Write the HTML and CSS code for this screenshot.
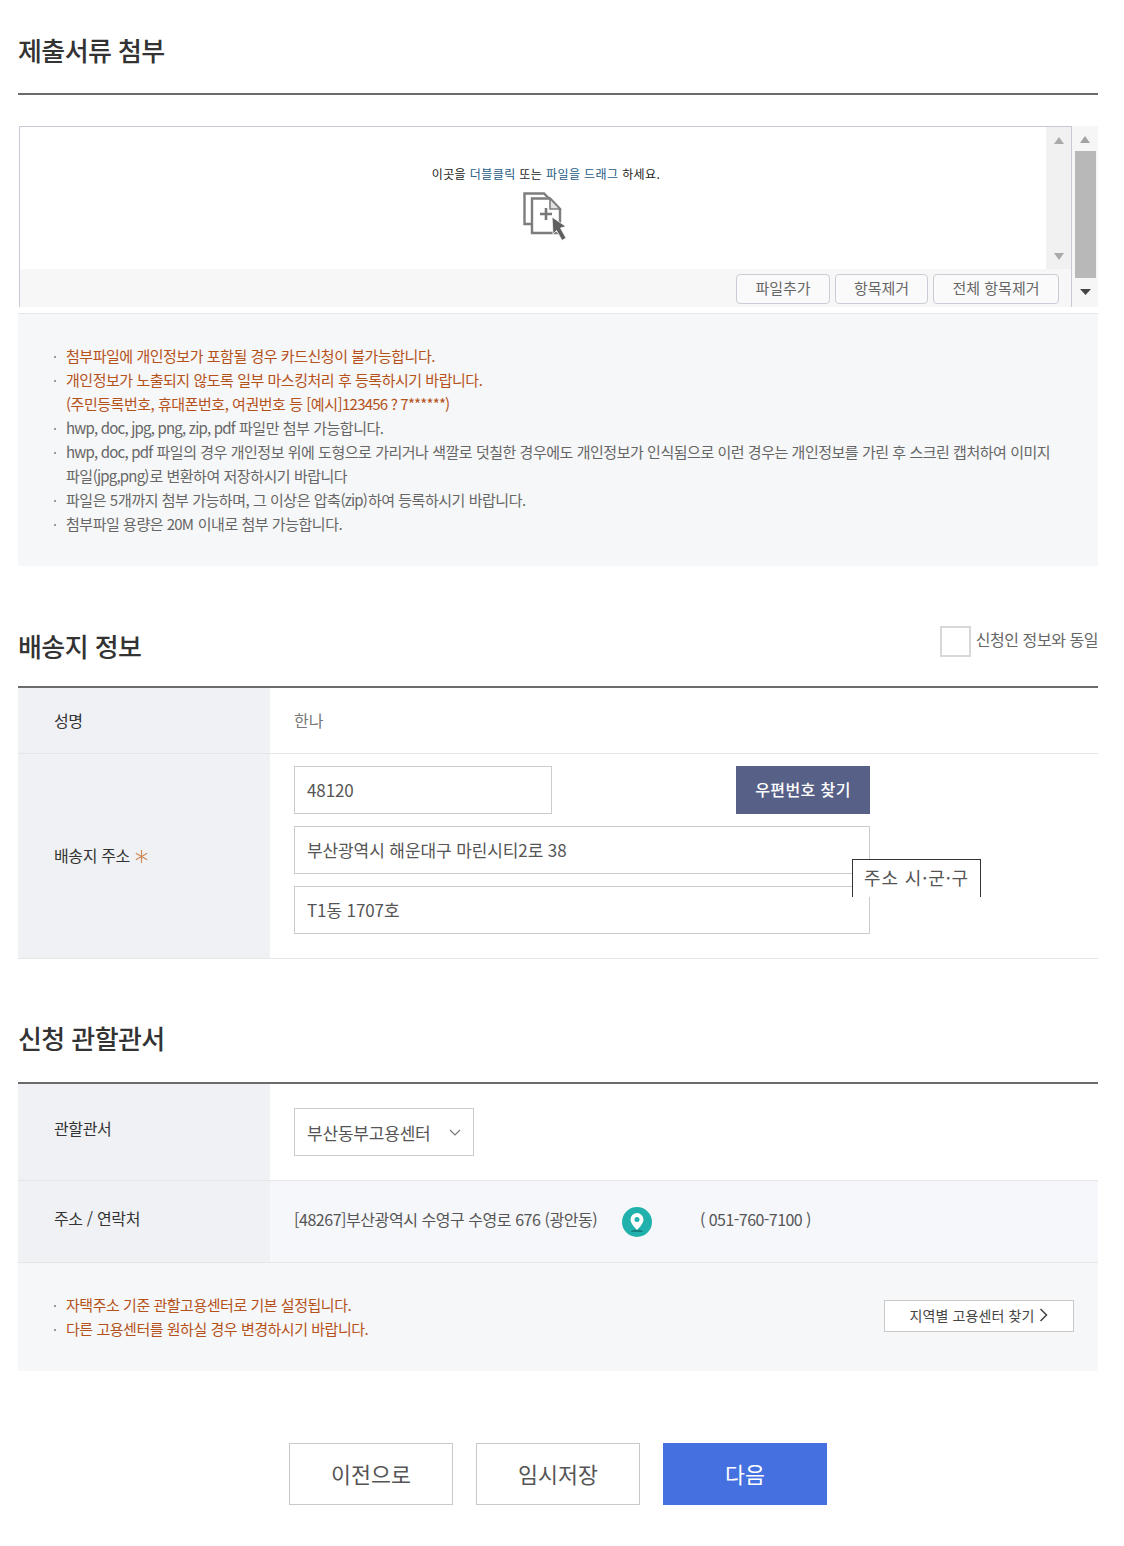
FILE: index.html
```html
<!DOCTYPE html>
<html lang="ko">
<head>
<meta charset="utf-8">
<title>제출서류 첨부</title>
<link rel="stylesheet" href="styles.css">
</head>
<body>
<main class="page">
  <h2 class="title first">제출서류 첨부</h2>
  <div class="rule"></div>

  <div class="uploader">
    <div class="up-main">
      <div class="drop">
        <div class="drop-area">
          <p class="drop-text">이곳을 <span class="link">더블클릭</span> 또는 <span class="link">파일을 드래그</span> 하세요.</p>
          <svg class="drop-icon" width="46" height="50" viewBox="0 0 46 50">
            <path d="M8 32H1.500V1.500H21l5 5" fill="none" stroke="#7d7d7d" stroke-width="2.400"/>
            <path d="M9 6.500h18l10 10.500v24H9z" fill="#fff" stroke="#7d7d7d" stroke-width="2.400"/>
            <path d="M27 6.500V17h10z" fill="#e4e4e4" stroke="#7d7d7d" stroke-width="1.600"/>
            <path d="M17 22h12M23 16v12" stroke="#777" stroke-width="2.600"/>
            <path d="M29 25l1 17 3.500-3.500 5.500 10 4-2.500-5.500-10 5.500-1.500z" fill="#5f5f5f" stroke="#fff" stroke-width=".8"/>
          </svg>
        </div>
        <div class="inner-bar">
          <svg width="10" height="7" viewBox="0 0 10 7"><path d="M5 0l5 7H0z" fill="#aaa"/></svg>
          <svg width="10" height="7" viewBox="0 0 10 7"><path d="M5 7L0 0h10z" fill="#aaa"/></svg>
        </div>
      </div>
      <div class="up-actions">
        <button class="up-btn w-a">파일추가</button>
        <button class="up-btn w-b">항목제거</button>
        <button class="up-btn w-c">전체 항목제거</button>
      </div>
    </div>
    <div class="outer-bar">
      <svg class="arrow-top" width="10" height="7" viewBox="0 0 10 7"><path d="M5 0l5 7H0z" fill="#a3a3a3"/></svg>
      <div class="thumb"></div>
      <svg class="arrow-bottom" width="11" height="6" viewBox="0 0 11 6"><path d="M5.500 6L0 0h11z" fill="#444"/></svg>
    </div>
  </div>

  <div class="note note-upload">
    <ul class="bullets">
      <li class="warn">첨부파일에 개인정보가 포함될 경우 카드신청이 불가능합니다.</li>
      <li class="warn">개인정보가 노출되지 않도록 일부 마스킹처리 후 등록하시기 바랍니다.<br>(주민등록번호, 휴대폰번호, 여권번호 등 [예시]<span class="lat">123456 ? 7******)</span></li>
      <li><span class="lat">hwp, doc, jpg, png, zip, pdf </span>파일만 첨부 가능합니다.</li>
      <li><span class="lat">hwp, doc, pdf </span>파일의 경우 개인정보 위에 도형으로 가리거나 색깔로 덧칠한 경우에도 개인정보가 인식됨으로 이런 경우는 개인정보를 가린 후 스크린 캡처하여 이미지<br>파일<span class="lat">(jpg,png)</span>로 변환하여 저장하시기 바랍니다</li>
      <li>파일은 <span class="lat">5</span>개까지 첨부 가능하며, 그 이상은 압축<span class="lat">(zip)</span>하여 등록하시기 바랍니다.</li>
      <li>첨부파일 용량은 <span class="lat">20M</span> 이내로 첨부 가능합니다.</li>
    </ul>
  </div>

  <div class="head-row">
    <h2 class="title">배송지 정보</h2>
    <label class="same"><span class="check"></span>신청인 정보와 동일</label>
  </div>
  <div class="rule"></div>

  <div class="row row-name">
    <div class="th">성명</div>
    <div class="td name">한나</div>
  </div>
  <div class="row row-addr">
    <div class="th">배송지 주소
      <svg class="star" width="13" height="13" viewBox="0 0 13 13"><path d="M6.500 0v13M.8 3.200l11.400 6.600M12.200 3.200L.8 9.800" stroke="#cf8a57" stroke-width="1.200"/></svg>
    </div>
    <div class="td addr">
      <div class="zip-line">
        <div class="input zip">48120</div>
        <button class="zip-btn">우편번호 찾기</button>
      </div>
      <div class="input wide">부산광역시 해운대구 마린시티2로 38</div>
      <div class="input wide">T1동 1707호</div>
      <div class="tooltip">주소 시·군·구</div>
    </div>
  </div>

  <h2 class="title third">신청 관할관서</h2>
  <div class="rule"></div>

  <div class="row row-office">
    <div class="th up">관할관서</div>
    <div class="td">
      <div class="input select">부산동부고용센터
        <svg width="12" height="7" viewBox="0 0 12 7"><path d="M1 1l5 5 5-5" fill="none" stroke="#777" stroke-width="1.200"/></svg>
      </div>
    </div>
  </div>
  <div class="row row-contact">
    <div class="th up">주소 / 연락처</div>
    <div class="td contact">
      <span class="place">[48267]부산광역시 수영구 수영로 676 (광안동)</span>
      <svg class="pin" width="30" height="30" viewBox="0 0 30 30">
        <circle cx="15" cy="15" r="15" fill="#20b1ad"/>
        <path d="M9 25a6 2.500 0 0 1 12 0z" fill="#14807f"/>
        <path d="M15 6a6.500 6.500 0 0 0-6.500 6.500C8.500 17 15 23 15 23s6.500-6 6.500-10.500A6.500 6.500 0 0 0 15 6z" fill="#fff"/>
        <circle cx="15" cy="12.500" r="2.500" fill="#20b1ad"/>
      </svg>
      <span class="phone">( 051-760-7100 )</span>
    </div>
  </div>
  <div class="note note-office">
    <ul class="bullets">
      <li class="warn">자택주소 기준 관할고용센터로 기본 설정됩니다.</li>
      <li class="warn">다른 고용센터를 원하실 경우 변경하시기 바랍니다.</li>
    </ul>
    <a class="region">지역별 고용센터 찾기
      <svg width="9" height="14" viewBox="0 0 9 14"><path d="M1.500 1l6 6-6 6" fill="none" stroke="#444" stroke-width="1.500"/></svg>
    </a>
  </div>

  <div class="actions">
    <button class="act">이전으로</button>
    <button class="act">임시저장</button>
    <button class="act primary">다음</button>
  </div>
</main>
</body>
</html>
```

FILE: styles.css
```css
* { box-sizing: border-box; }
html, body { margin: 0; padding: 0; background: #fff; }
body {
  font-family: "Noto Sans CJK KR", "Noto Sans", sans-serif;
  color: #555;
  height: 1546px;
  overflow: hidden;
}
.page { width: 1080px; margin-left: 18px; }
h2, p, ul { margin: 0; padding: 0; }
button { font-family: inherit; cursor: pointer; }

.title {
  font-size: 26px;
  line-height: 38px;
  font-weight: 500;
  color: #333;
  letter-spacing: -0.6px;
}
.title.first { padding-top: 31px; height: 93px; }
.title.third { margin-top: 60px; height: 63px; }
.rule { height: 2px; background: #6b6b6b; }

.uploader { display: flex; margin-top: 31px; height: 181px; }
.up-main {
  width: 1053px;
  margin-left: 1px;
  border: 1px solid #c6cad3;
  border-bottom: 0;
  display: flex;
  flex-direction: column;
}
.drop { height: 142px; display: flex; }
.drop-area { flex: 1; display: flex; flex-direction: column; align-items: center; padding-left: 26px; }
.drop-text {
  margin-top: 38px;
  font-size: 12px;
  line-height: 18px;
  color: #222;
  letter-spacing: 0.4px;
}
.link { color: #1d5b85; }
.drop-icon { margin-top: 9px; }
.inner-bar {
  width: 25px;
  background: #f1f1f1;
  display: flex;
  flex-direction: column;
  align-items: center;
  justify-content: space-between;
  padding: 10px 0 9px;
}
.up-actions {
  flex: 1;
  background: #f7f7f7;
  display: flex;
  justify-content: flex-end;
  gap: 5px;
  padding: 5px 12px 0 0;
}
.up-btn {
  height: 30px;
  background: #fafafa;
  border: 1px solid #c9ced6;
  border-radius: 4px;
  font-size: 15px;
  line-height: 20px;
  color: #666;
  padding: 0 0 3px;
}
.w-a { width: 94px; }
.w-b { width: 93px; }
.w-c { width: 126px; }
.outer-bar {
  width: 26px;
  background: #f6f6f6;
  display: flex;
  flex-direction: column;
  align-items: center;
}
.arrow-top { margin-top: 10px; }
.thumb { width: 21px; height: 127px; margin-top: 8px; background: #b8b8b8; }
.arrow-bottom { margin-top: 11px; }

.note { background: #f6f7f8; }
.note-upload { margin-top: 6px; height: 253px; border-top: 1px solid #e6e6e6; padding: 30px 36px 0 36px; }
.bullets { list-style: none; font-size: 15px; line-height: 24px; letter-spacing: -0.47px; color: #666; }
.bullets li { position: relative; padding-left: 12px; }
.bullets li::before {
  content: "";
  position: absolute;
  left: 0;
  top: 12px;
  width: 2px;
  height: 2px;
  background: #999;
}
.bullets .warn { color: #b5521b; }
.lat { letter-spacing: -0.8px; padding-right: 0.8px; }

.head-row { display: flex; justify-content: space-between; height: 120px; padding-top: 61px; }
.same {
  display: flex;
  align-items: flex-start;
  font-size: 16px;
  line-height: 24px;
  color: #666;
  letter-spacing: -0.45px;
}
.check {
  width: 31px;
  height: 31px;
  border: 2px solid #d8d8d8;
  margin: -1px 5px 0 0;
  background: #fff;
}

.row { display: flex; border-bottom: 1px solid #e6e6e6; }
.th {
  width: 252px;
  flex: none;
  background: #f0f1f4;
  padding: 0 0 2px 36px;
  display: flex;
  align-items: center;
  gap: 5px;
  font-size: 16px;
  color: #333;
  letter-spacing: -0.35px;
  white-space: pre-line;
}
.td { flex: 1; padding-left: 24px; display: flex; align-items: center; }
.star { margin-top: 3px; flex: none; }
.row-name { height: 66px; }
.name { font-size: 16px; color: #777; padding-bottom: 2px; }
.row-addr { height: 205px; }
.addr { flex-direction: column; align-items: flex-start; justify-content: flex-start; padding-top: 12px; gap: 12px; position: relative; }
.input {
  height: 48px;
  border: 1px solid #ccc;
  background: #fff;
  font-size: 17px;
  color: #555;
  padding: 0 0 2px 12px;
  display: flex;
  align-items: center;
  letter-spacing: -0.1px;
}
.zip-line { display: flex; justify-content: space-between; width: 576px; }
.zip { width: 258px; }
.wide { width: 576px; }
.zip-btn {
  width: 134px;
  height: 48px;
  background: #576188;
  color: #fff;
  border: 0;
  font-size: 16px;
  font-weight: 500;
  letter-spacing: 0.4px;
  padding: 0 0 2px;
}
.tooltip {
  position: absolute;
  left: 582px;
  top: 105px;
  width: 129px;
  height: 38px;
  background: #fff;
  border: 1px solid #333;
  border-bottom: 0;
  font-size: 18px;
  line-height: 34px;
  color: #555;
  text-align: center;
  letter-spacing: 0.9px;
}

.row-office { height: 97px; }
.row-contact { height: 82px; background: #f5f7fa; }
.th.up { padding-bottom: 8px; }
.select { width: 180px; justify-content: space-between; padding: 0 12px; font-size: 17px; letter-spacing: -0.2px; }
.contact { font-size: 16px; letter-spacing: -0.45px; color: #555; padding-bottom: 5px; }
.place { width: 328px; }
.pin { flex: none; margin-top: 5px; }
.phone { margin-left: 48px; letter-spacing: -0.55px; }

.note-office {
  height: 108px;
  padding: 30px 24px 0 36px;
  display: flex;
  justify-content: space-between;
  align-items: flex-start;
}
.region {
  width: 190px;
  height: 32px;
  margin-top: 7px;
  padding-bottom: 2px;
  background: #fff;
  border: 1px solid #c9c9c9;
  font-size: 14px;
  color: #444;
  display: flex;
  align-items: center;
  justify-content: center;
  gap: 5px;
  letter-spacing: 0.1px;
}

.actions { display: flex; gap: 23px; margin: 72px 0 0 271px; }
.act {
  width: 164px;
  height: 62px;
  background: #fff;
  border: 1px solid #c9c9c9;
  font-size: 21.700px;
  color: #555;
  padding: 0 0 2px;
}
.act.primary { background: #4470e0; border-color: #4470e0; color: #fff; }
```
